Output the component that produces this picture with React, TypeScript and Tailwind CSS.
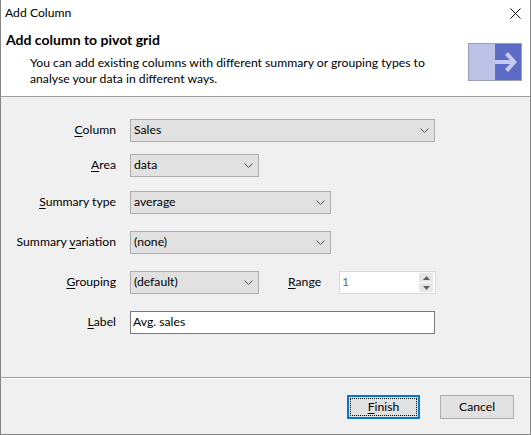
import React from 'react'

const font = "font-['Lato',sans-serif]"

const Chevron = () => (
    <svg width="9" height="5" viewBox="0 0 9 5" className="shrink-0">
        <polyline points="0.5,0.5 4.5,4.5 8.5,0.5" fill="none" stroke="#505050" strokeWidth="1" />
    </svg>
)

const Select = ({ value, width }: { value: string; width: string }) => (
    <div className={`${width} flex h-[23px] items-center justify-between border border-[#adadad] bg-[#e1e1e1] pl-[3px] pr-[5px]`}>
        <span>{value}</span>
        <Chevron />
    </div>
)

const Label = ({ text, mnemonic }: { text: string; mnemonic: number }) => (
    <span className="w-[115px] shrink-0 text-right">
        {text.slice(0, mnemonic)}
        <span className="underline underline-offset-[2px]">{text[mnemonic]}</span>
        {text.slice(mnemonic + 1)}
    </span>
)

export default function App() {
    return (
        <div className={`${font} flex h-[435px] w-[531px] flex-col border-x border-b border-[#858585] bg-[#f0f0f0] text-[12.2px] text-black`}>
            <div className="bg-white">
                <div className="flex h-[27px] items-center justify-between pl-[4px] pr-[9px]">
                    <span>Add Column</span>
                    <svg width="11" height="11" viewBox="0 0 11 11">
                        <path d="M0.5 0.5 L10.5 10.5 M10.5 0.5 L0.5 10.5" stroke="#111" strokeWidth="1" />
                    </svg>
                </div>
                <div className="flex h-[69px] justify-between pr-[8px]">
                    <div className="pl-[5px] pt-[3px]">
                        <div className="text-[14px] font-bold leading-[20px]">Add column to pivot grid</div>
                        <p className="mt-[5px] pl-[24px] leading-[15.5px]">
                            You can add existing columns with different summary or grouping types to
                            <br />
                            analyse your data in different ways.
                        </p>
                    </div>
                    <div className="mt-[16px] flex h-[38px] w-[54px] border border-[#9ca0b4]">
                        <div className="w-[26px] bg-[#bcc3e6]" />
                        <div className="flex flex-1 items-center justify-center bg-[#5c6bc6]">
                            <svg width="26" height="20" viewBox="0 0 26 20">
                                <path d="M0 8 H15 L10 3 L13 0 L22 10 L13 20 L10 17 L15 12 H0 Z" fill="#c5cbec" />
                            </svg>
                        </div>
                    </div>
                </div>
            </div>
            <div className="h-px bg-[#a0a0a0]" />
            <div className="flex h-[280px] flex-col pt-[22px]">
                <div className="flex items-center gap-[14px]">
                    <Label text="Column" mnemonic={0} />
                    <Select value="Sales" width="w-[305px]" />
                </div>
                <div className="mt-[12px] flex items-center gap-[14px]">
                    <Label text="Area" mnemonic={0} />
                    <Select value="data" width="w-[129px]" />
                </div>
                <div className="mt-[14px] flex items-center gap-[14px]">
                    <Label text="Summary type" mnemonic={0} />
                    <Select value="average" width="w-[201px]" />
                </div>
                <div className="mt-[17px] flex items-center gap-[14px]">
                    <Label text="Summary variation" mnemonic={8} />
                    <Select value="(none)" width="w-[201px]" />
                </div>
                <div className="mt-[17px] flex items-center gap-[14px]">
                    <Label text="Grouping" mnemonic={0} />
                    <Select value="(default)" width="w-[129px]" />
                    <span className="ml-[15px] w-[37px]">
                        <span className="underline underline-offset-[2px]">R</span>ange
                    </span>
                    <div className="flex h-[23px] w-[97px] items-center justify-between border border-[#d9d9d9] bg-white pl-[2px] pr-[2px]">
                        <span className="text-[#6d6d6d]">1</span>
                        <div className="flex flex-col gap-px">
                            <div className="flex h-[9px] w-[14px] items-center justify-center bg-[#e6e6e6]">
                                <svg width="7" height="4" viewBox="0 0 7 4"><path d="M0 4 L3.5 0 L7 4 Z" fill="#606060" /></svg>
                            </div>
                            <div className="flex h-[9px] w-[14px] items-center justify-center bg-[#e6e6e6]">
                                <svg width="7" height="4" viewBox="0 0 7 4"><path d="M0 0 L3.5 4 L7 0 Z" fill="#606060" /></svg>
                            </div>
                        </div>
                    </div>
                </div>
                <div className="mt-[17px] flex items-center gap-[14px]">
                    <Label text="Label" mnemonic={0} />
                    <div className="flex h-[23px] w-[305px] items-center border border-[#7a7a7a] bg-white pl-[2px]">
                        Avg. sales
                    </div>
                </div>
            </div>
            <div className="h-px bg-[#a0a0a0]" />
            <div className="h-px bg-white" />
            <div className="flex justify-end gap-[20px] pr-[16px] pt-[16px]">
                <button className="h-[24px] w-[73px] border-2 border-[#0078d7] bg-[#e1e1e1] p-px">
                    <div className="flex h-full w-full items-center justify-center border border-dotted border-black">
                        <span><span className="underline underline-offset-[2px]">F</span>inish</span>
                    </div>
                </button>
                <button className="h-[24px] w-[74px] border border-[#adadad] bg-[#e1e1e1]">Cancel</button>
            </div>
        </div>
    )
}
